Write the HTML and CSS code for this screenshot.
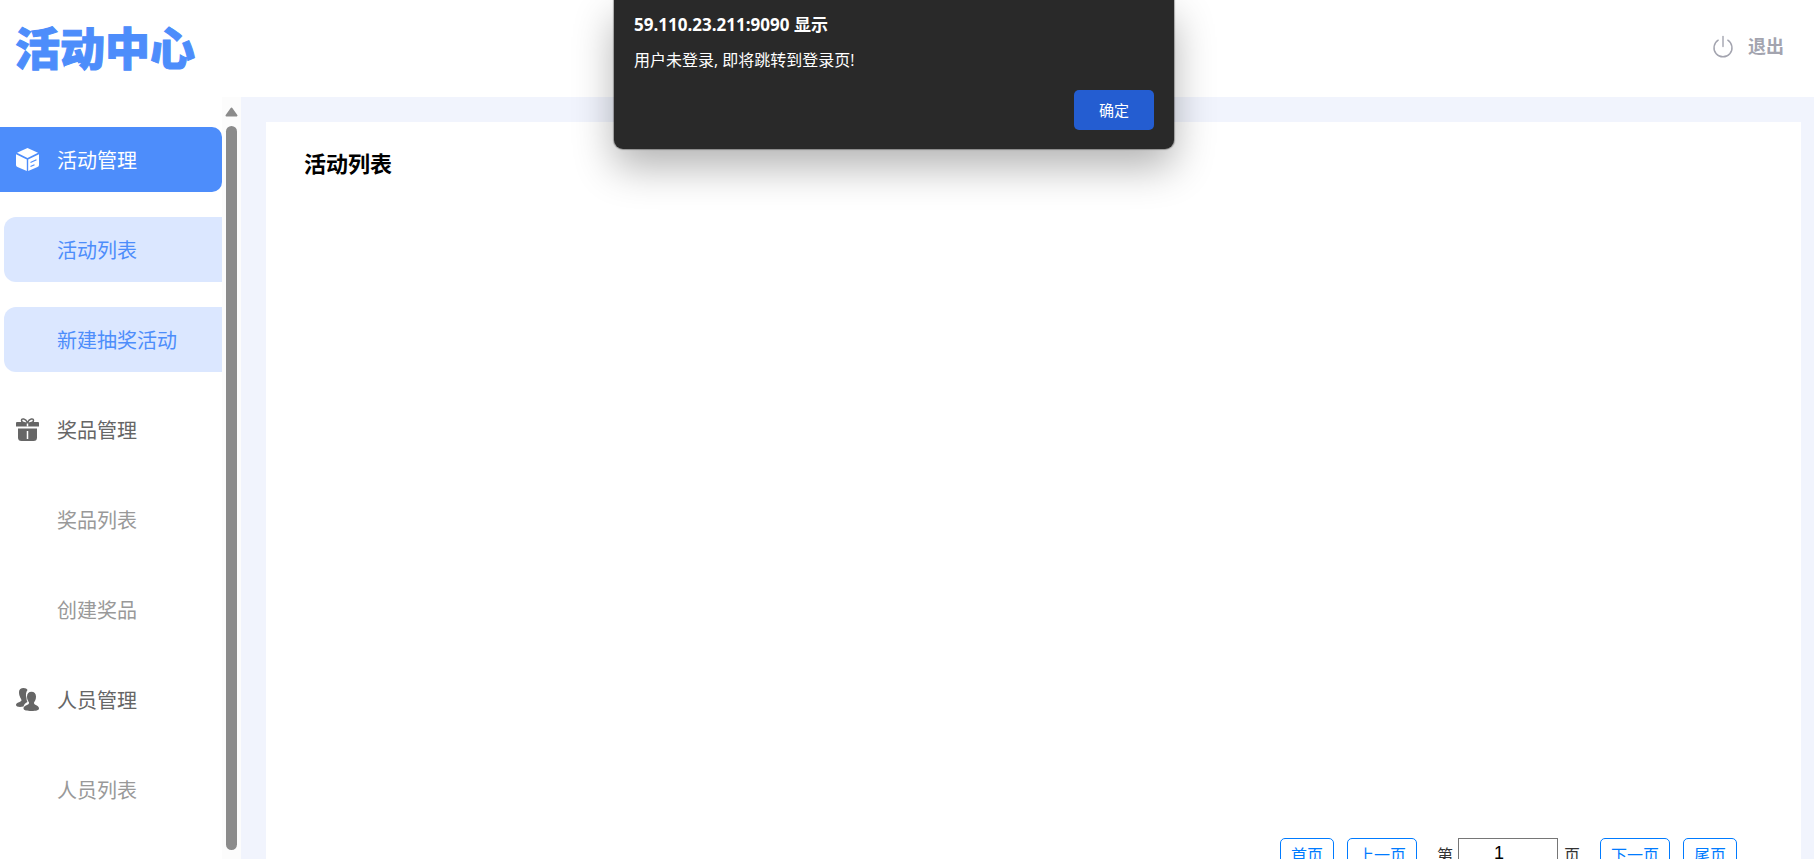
FILE: index.html
```html
<!DOCTYPE html>
<html lang="zh-CN">
<head>
  <meta charset="UTF-8">
  <meta name="viewport" content="width=device-width, initial-scale=1.0">
  <title>活动中心</title>
  <link rel="stylesheet" href="styles.css">
</head>
<body>

  <header class="header">
    <div class="logo">活动中心</div>
    <a href="#" class="logout">
      <svg width="22" height="24" viewBox="0 0 22 24" fill="none" stroke="currentColor" stroke-width="1.4" stroke-linecap="round">
        <path d="M11 1.500V11.500"/>
        <path d="M6.200 5.200A9 9 0 1 0 15.800 5.200"/>
      </svg>
      <span>退出</span>
    </a>
  </header>

  <div class="container">
    <aside class="sidebar">
      <nav class="menu">
        <a href="#" class="menu-item active">
          <svg class="icon" viewBox="0 0 23 23" fill="currentColor">
            <path d="M11.500 0L22 4.800L11.500 10L1 4.800Z"/>
            <path d="M0 6.300L10.800 11.500V23L1.500 19Q0 18.300 0 17Z"/>
            <path d="M23 6.300L12.200 11.500V23L21.500 19Q23 18.300 23 17Z"/>
            <path d="M14.500 14.500L20.500 11.800M14.500 18.500L18.500 16.700" stroke="#4d8dfb" stroke-width="1.200"/>
          </svg>
          <span>活动管理</span>
        </a>
        <a href="#" class="menu-item sub selected">活动列表</a>
        <a href="#" class="menu-item sub selected">新建抽奖活动</a>
        <a href="#" class="menu-item">
          <svg class="icon" viewBox="0 0 23 23" fill="currentColor">
            <path d="M1 4H22Q23 4 23 5V8.500H0V5Q0 4 1 4Z"/>
            <path d="M2 10.500H21V19.500Q21 23 17.500 23H5.500Q2 23 2 19.500Z"/>
            <path d="M11.500 5C9 5 5.500 4.500 5.500 2.500C5.500 .2 9.500 .2 11.500 4.500C13.500 .2 17.500 .2 17.500 2.500C17.500 4.500 14 5 11.500 5Z" fill="#fff" stroke="currentColor" stroke-width="1.500"/>
            <path d="M11.500 5.500V8.500M11.500 13V21" stroke="#fff" stroke-width="1.500"/>
          </svg>
          <span>奖品管理</span>
        </a>
        <a href="#" class="menu-item sub">奖品列表</a>
        <a href="#" class="menu-item sub">创建奖品</a>
        <a href="#" class="menu-item">
          <svg class="icon" viewBox="0 0 23 23" fill="currentColor">
            <path d="M3 4C3 1.500 5 0 7.500 0C9.500 0 11 .7 11.500 2C9.800 4 9.500 7 10.500 10C10.500 12 11 13 11.500 14C9.500 15 8 16 7.500 18.500C4 19.300 0 19 0 17C0 14.500 4 14.500 5.500 12.500C5.500 10.500 3 9 3 4Z"/>
            <path d="M11 8.500C11 5.500 12.800 3.800 15.500 3.800C18.200 3.800 20 5.500 20 8.500C20 11.500 19 13 18 14.500C17.500 17.500 23 17 23 20.500C23 22.300 20 23 15.500 23C11 23 7.500 22.300 7.500 20.500C7.500 17 13.500 17.500 13 14.500C12 13 11 11.500 11 8.500Z"/>
          </svg>
          <span>人员管理</span>
        </a>
        <a href="#" class="menu-item sub">人员列表</a>
      </nav>
      <div class="scrollbar">
        <svg width="13" height="10" viewBox="0 0 13 10">
          <path d="M6.500 1.500L11.500 8.500H1.500Z" fill="#8b8b8b" stroke="#8b8b8b" stroke-width="2" stroke-linejoin="round"/>
        </svg>
        <div class="thumb"></div>
      </div>
    </aside>

    <main class="content">
      <section class="panel">
        <h2>活动列表</h2>
        <div class="activity-list"></div>
        <div class="pagination">
          <button type="button" class="page-btn">首页</button>
          <button type="button" class="page-btn">上一页</button>
          <label class="page-jump" for="pageInput">第</label>
          <input type="text" inputmode="numeric" id="pageInput" value="1">
          <span class="page-unit">页</span>
          <button type="button" class="page-btn">下一页</button>
          <button type="button" class="page-btn">尾页</button>
        </div>
      </section>
    </main>
  </div>

  <div class="alert" role="alertdialog" aria-labelledby="alertTitle" aria-describedby="alertText">
    <h1 id="alertTitle">59.110.23.211:9090 显示</h1>
    <p id="alertText">用户未登录, 即将跳转到登录页!</p>
    <button type="button">确定</button>
  </div>

</body>
</html>
```

FILE: styles.css
```css
* {
  box-sizing: border-box;
}
body {
  margin: 0;
  height: 100vh;
  overflow: hidden;
  display: flex;
  flex-direction: column;
  font-family: "Liberation Sans", "Noto Sans CJK SC", sans-serif;
  background-color: #fff;
  color: #333;
}
a {
  text-decoration: none;
}

/* header */
.header {
  display: flex;
  flex: none;
  align-items: center;
  justify-content: space-between;
  height: 97px;
  padding: 0 30px 4px 15px;
}
.logo {
  font-family: "Noto Sans CJK SC", sans-serif;
  font-size: 45px;
  font-weight: 900;
  line-height: 60px;
  color: #4d8dfb;
  -webkit-text-stroke: 1px #4d8dfb;
}
.logout {
  display: flex;
  align-items: center;
  gap: 14px;
  font-size: 18px;
  font-weight: bold;
  line-height: 24px;
  color: #a3a4af;
}

/* sidebar */
.container {
  display: flex;
  flex: 1;
  min-height: 0;
}
.sidebar {
  display: flex;
  flex: none;
  width: 241px;
}
.menu {
  flex: 1;
  padding-top: 30px;
  overflow: hidden;
}
.menu-item {
  display: flex;
  align-items: center;
  gap: 18px;
  height: 65px;
  margin-bottom: 25px;
  padding-left: 16px;
  font-size: 20px;
  color: #666;
}
.menu-item.active {
  background-color: #4d8dfb;
  border-radius: 0 10px 10px 0;
  color: #fff;
}
.menu-item.sub {
  margin-left: 4px;
  padding-left: 53px;
  color: #999;
}
.menu-item.selected {
  background-color: #dbe7ff;
  border-radius: 12px 0 0 12px;
  color: #4d8dfb;
}
.icon {
  width: 23px;
  height: 23px;
}
.scrollbar {
  display: flex;
  flex-direction: column;
  align-items: center;
  gap: 9px;
  width: 19px;
  padding: 10px 0 9px;
  background-color: #fcfcfc;
}
.scrollbar svg {
  flex: none;
}
.thumb {
  flex: 1;
  width: 11px;
  border-radius: 6px;
  background-color: #8b8b8b;
}

/* content */
.content {
  flex: 1;
  padding: 25px 13px 0 25px;
  overflow: hidden;
  background-color: #f1f4fd;
}
.panel {
  padding: 26px 64px 30px 38px;
  background-color: #fff;
}
.panel h2 {
  margin: 0;
  font-size: 22px;
  line-height: 34px;
  color: #000;
}
.activity-list {
  min-height: calc(100vh - 203px);
}
.pagination {
  display: flex;
  align-items: center;
  justify-content: flex-end;
  font-size: 16px;
}
.page-btn {
  height: 31px;
  margin-left: 13px;
  padding: 0 10px;
  border: 1px solid #007bff;
  border-radius: 5px;
  background-color: #fff;
  font: inherit;
  color: #007bff;
}
.page-jump {
  margin: 0 5px 0 20px;
}
.page-unit {
  margin: 0 7px 0 6px;
}
#pageInput {
  width: 100px;
  height: 31px;
  padding: 0 18px 0 0;
  border: 1px solid #767676;
  font: inherit;
  font-size: 18px;
  text-align: center;
  color: #000;
}

/* alert */
.alert {
  position: absolute;
  top: 0;
  left: calc(50% - 293px);
  display: flex;
  flex-direction: column;
  width: 560px;
  padding: 13px 20px 19px;
  border-radius: 0 0 9px 9px;
  background-color: #292929;
  box-shadow: 0 0 1px 1px rgba(0, 0, 0, 0.3), 0 18px 40px rgba(0, 0, 0, 0.3);
  font-family: "Open Sans", "Noto Sans CJK SC", sans-serif;
  color: #fff;
}
.alert h1 {
  margin: 0 0 11px;
  font-size: 17px;
  line-height: 24px;
}
.alert p {
  margin: 0 0 18px;
  font-size: 16px;
  line-height: 24px;
}
.alert button {
  align-self: flex-end;
  width: 80px;
  height: 40px;
  padding: 0 0 2px;
  border: 0;
  border-radius: 5px;
  background-color: #245dd1;
  font-family: inherit;
  font-size: 15px;
  color: #fff;
}
```
